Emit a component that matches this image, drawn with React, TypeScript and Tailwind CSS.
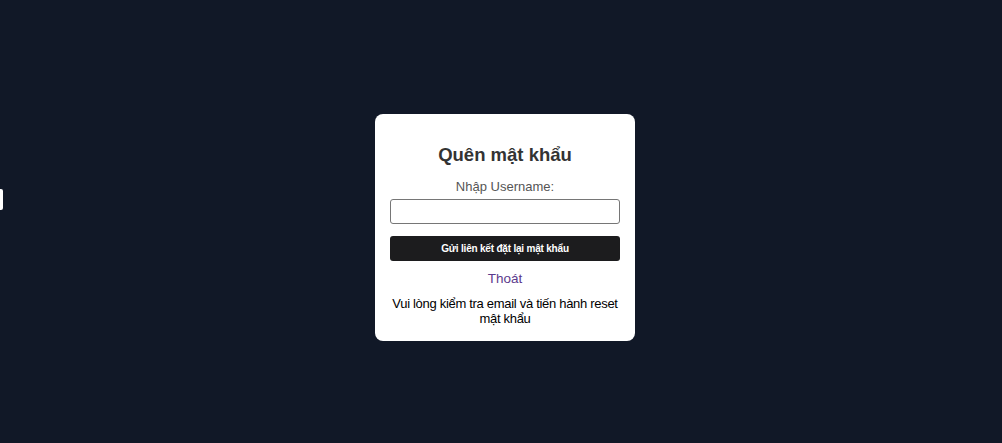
import { useState } from 'react';

export default function App() {
    const [username, setUsername] = useState('');

    return (
        <div className="relative min-h-[443px] w-full bg-[#111827] flex items-center justify-center pl-[8px] pt-[12px] font-['Liberation_Sans',Arial,sans-serif]">
            {/* Left edge tab */}
            <div className="absolute left-0 top-[189px] w-[3px] h-[21px] bg-white rounded-r-[2px]"></div>

            {/* Card */}
            <div className="w-[260px] bg-white rounded-[8px] p-[15px] flex flex-col items-center text-center">
                <h2 className="mt-[14px] text-[18.5px] leading-[24px] font-bold text-[#333]">Quên mật khẩu</h2>

                <label className="mt-[12px] text-[13px] leading-[16px] text-[#555]">Nhập Username:</label>
                <input
                    value={username}
                    onChange={(e) => setUsername(e.target.value)}
                    className="mt-[4px] w-full h-[25px] border border-[#767676] rounded-[3px] px-2 text-[13px] outline-none"
                />

                <button className="mt-[12px] w-full h-[25px] bg-[#1c1c1e] rounded-[3px] text-white text-[10px] tracking-[-0.2px] font-bold">
                    Gửi liên kết đặt lại mật khẩu
                </button>

                <a href="#" className="mt-[10px] text-[13.5px] leading-[16px] text-[#5b3a8c]">Thoát</a>

                <p className="mt-[9px] text-[13px] leading-[15px] tracking-[-0.3px] text-black">
                    Vui lòng kiểm tra email và tiến hành reset mật khẩu
                </p>
            </div>
        </div>
    );
}
